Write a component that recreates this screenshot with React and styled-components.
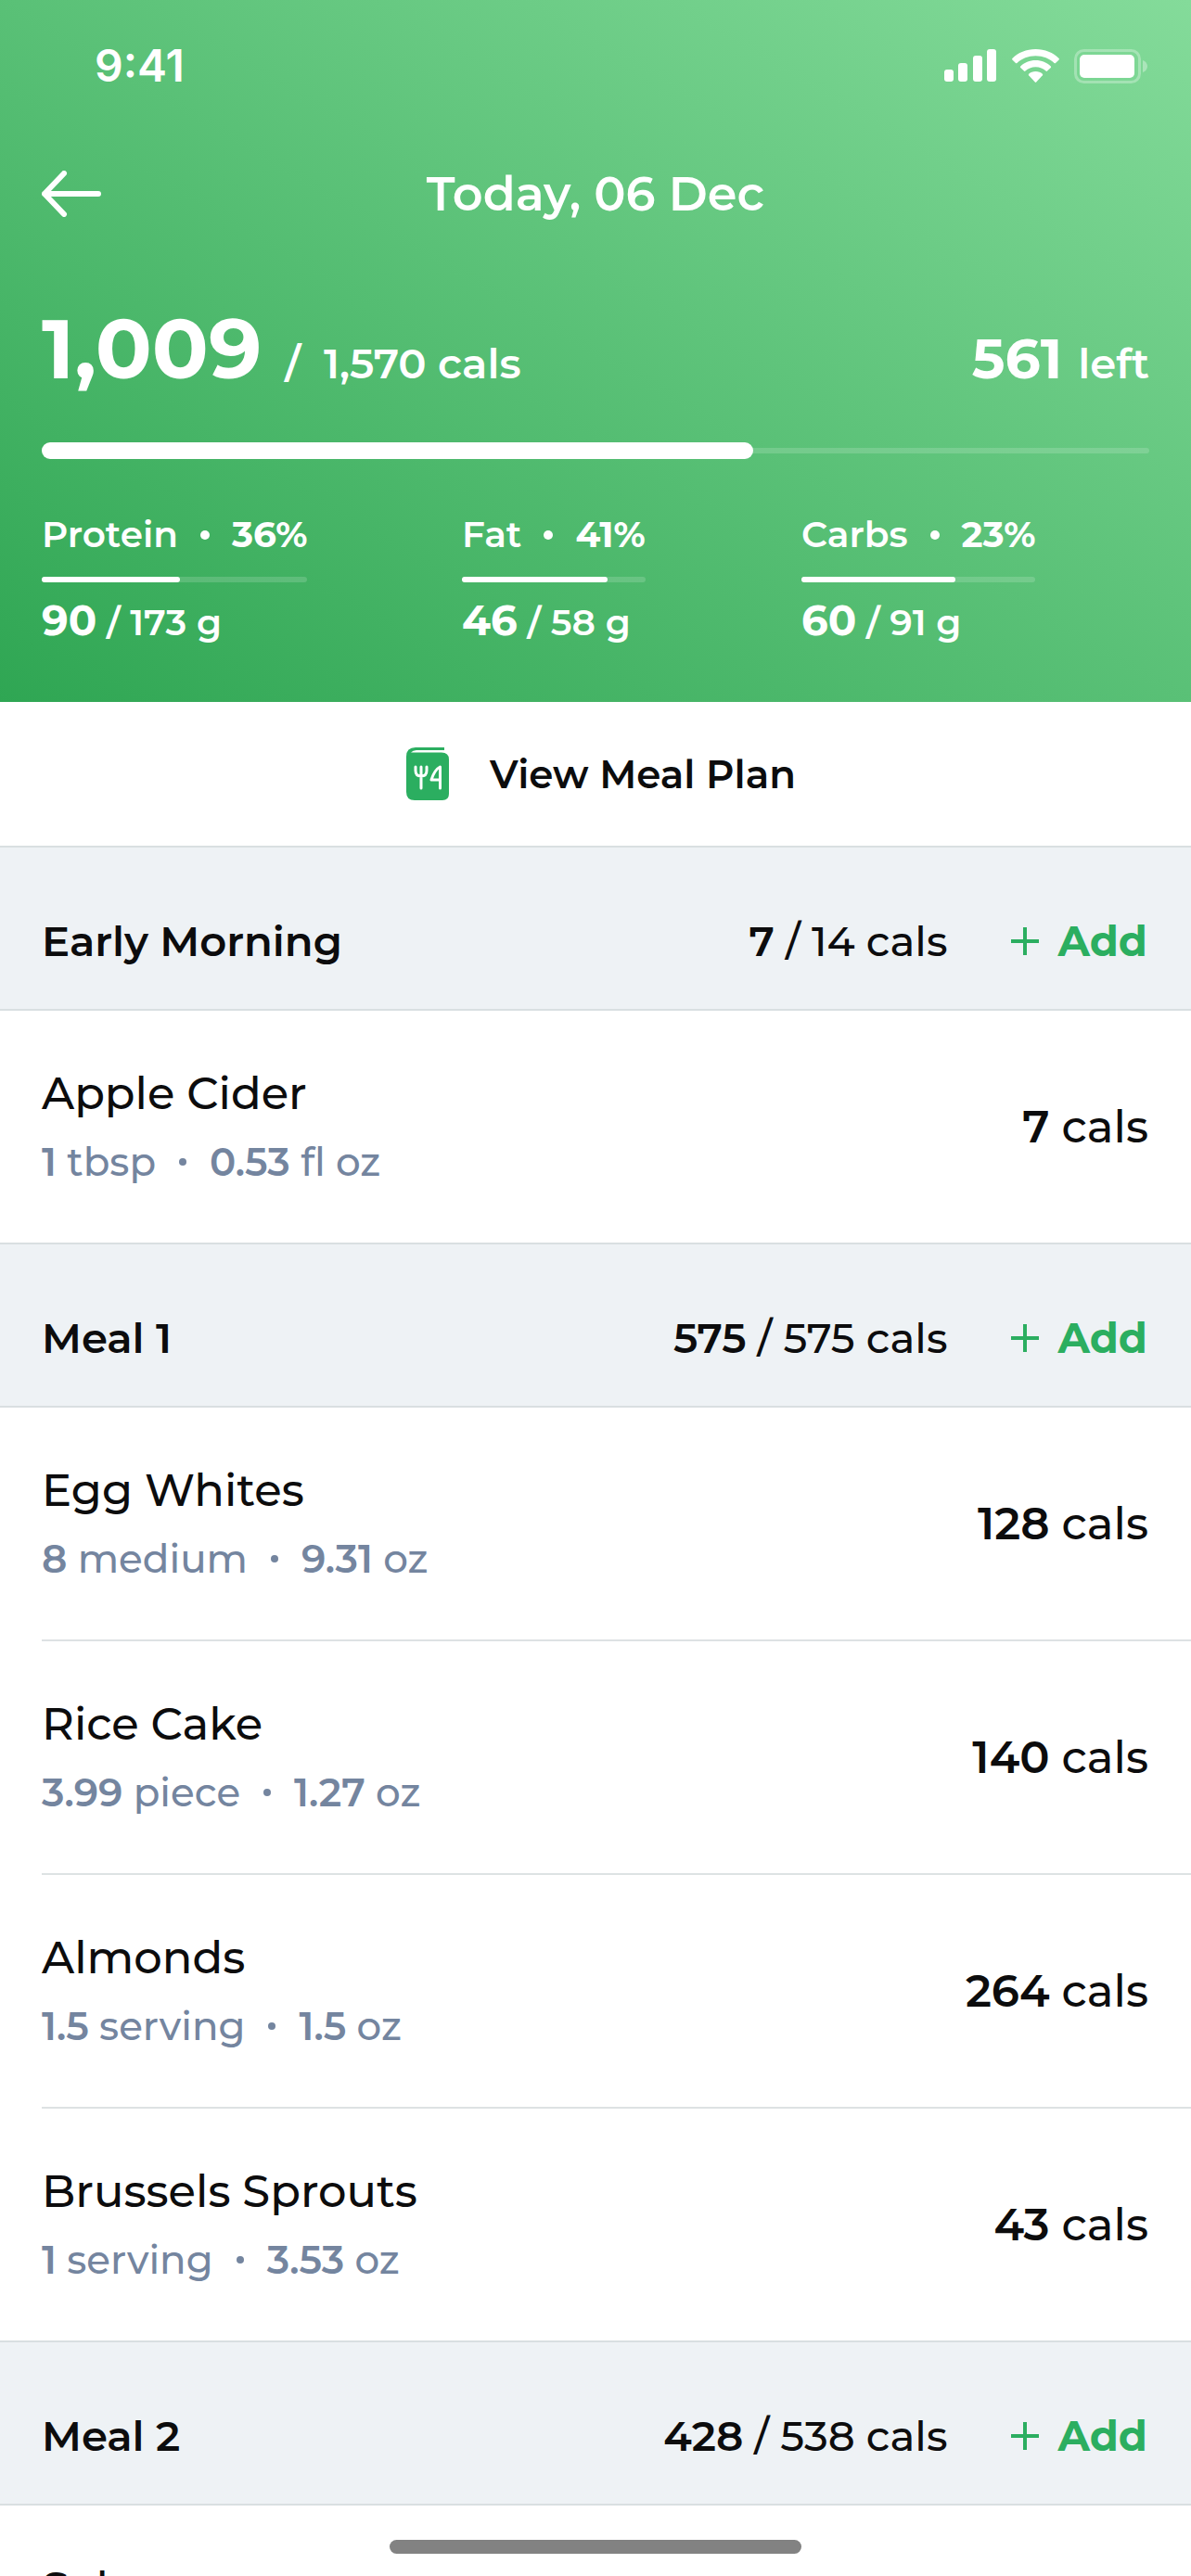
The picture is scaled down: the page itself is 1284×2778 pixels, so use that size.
import React, { useState } from 'react'
import styled, { createGlobalStyle } from 'styled-components'

const GlobalStyle = createGlobalStyle`
  * {
    box-sizing: border-box;
  }
  body {
    margin: 0;
    background: #fff;
    color: #0c0c0d;
    font-family: Montserrat, Inter, sans-serif;
    font-weight: 500;
  }
  h1, h2, h3, p, ul {
    margin: 0;
    padding: 0;
    font-size: inherit;
    font-weight: inherit;
  }
  ul {
    list-style: none;
  }
  button {
    margin: 0;
    padding: 0;
    border: 0;
    background: none;
    color: inherit;
    font: inherit;
    cursor: pointer;
  }
  svg {
    display: block;
  }
`

const Screen = styled.div`
  height: 100vh;
  overflow: hidden;
`

const Summary = styled.header`
  padding: 0 45px 58px;
  color: #fff;
  background: linear-gradient(to top right, #2fa653, #84db9a);
`

const StatusBar = styled.div`
  display: flex;
  justify-content: space-between;
  align-items: center;
  height: 142px;
  padding-left: 57px;
`

const Clock = styled.time`
  font-family: Inter, sans-serif;
  font-size: 48px;
  font-weight: 600;
  line-height: 60px;
`

const StatusIcons = styled.div`
  display: flex;
  align-items: center;
  gap: 16px;
`

const NavBar = styled.nav`
  display: grid;
  grid-template-columns: 1fr auto 1fr;
  align-items: center;
  height: 134px;
`

const Title = styled.h1`
  font-size: 51px;
  font-weight: 600;
  line-height: 64px;
`

const Totals = styled.div`
  display: flex;
  justify-content: space-between;
  align-items: baseline;
  height: 207px;
  padding-top: 46px;
  font-size: 45px;
  font-weight: 600;
  line-height: 108px;
`

const Eaten = styled.p`
  display: flex;
  align-items: baseline;
  gap: 25px;
`

const Left = styled.p`
  display: flex;
  align-items: baseline;
  gap: 17px;
`

const Figure = styled.strong`
  font-size: ${props => props.size || 'inherit'};
  font-weight: 700;
`

const Amount = styled.strong`
  font-weight: 600;
`

const Track = styled.div`
  display: flex;
  align-items: center;
  height: 6px;
  border-radius: 3px;
  background: rgba(255, 255, 255, 0.16);
`

const Fill = styled.div`
  height: ${props => (props.$thick ? '18px' : '6px')};
  border-radius: ${props => (props.$thick ? '9px' : '3px')};
  background: #fff;
`

const Macros = styled.ul`
  display: grid;
  grid-template-columns: 453fr 366fr 375fr;
  justify-items: start;
  margin-top: 62px;
  font-size: 39px;
  font-weight: 600;
`

const MacroLabel = styled.p`
  display: flex;
  align-items: center;
  gap: 24px;
  margin-bottom: 20px;
  line-height: 51px;
`

const MacroAmount = styled.p`
  margin-top: 13px;
  line-height: 56px;
`

const Dot = styled.span`
  width: ${props => props.size};
  height: ${props => props.size};
  border-radius: 50%;
  background: currentColor;
`

const PlanButton = styled.button`
  display: flex;
  justify-content: center;
  align-items: center;
  gap: 37px;
  width: 100%;
  height: 155px;
  font-size: 42px;
  font-weight: 600;
`

const MealHeader = styled.div`
  display: flex;
  align-items: center;
  height: 178px;
  padding: 28px 47px 0 45px;
  border-top: 2px solid #d9dfe1;
  border-bottom: 2px solid #d9dfe1;
  background: #eef2f5;
  font-size: 45px;
  line-height: 60px;
`

const MealName = styled.h2`
  flex: 1;
  font-weight: 600;
`

const AddButton = styled.button`
  display: flex;
  align-items: center;
  gap: 20px;
  margin-left: 69px;
  color: #2bae60;
  font-weight: 700;
`

const FoodRow = styled.li`
  display: flex;
  justify-content: space-between;
  align-items: center;
  height: 250px;
  margin-left: 45px;
  padding-right: 46px;
  font-size: 48px;
  line-height: 64px;

  & + & {
    height: 252px;
    border-top: 2px solid #dde2e3;
  }
`

const Serving = styled.p`
  display: flex;
  align-items: center;
  gap: 25px;
  margin-top: 12px;
  color: #74859f;
  font-size: 42px;
  line-height: 60px;
`

const HomeIndicator = styled.div`
  position: fixed;
  bottom: 24px;
  left: 50%;
  width: 444px;
  height: 15px;
  margin-left: -222px;
  border-radius: 8px;
  background: #828282;
`

const macros = [
  { name: 'Protein', share: 36, eaten: 90, goal: 173 },
  { name: 'Fat', share: 41, eaten: 46, goal: 58 },
  { name: 'Carbs', share: 23, eaten: 60, goal: 91 }
]

const meals = [
  {
    name: 'Early Morning',
    eaten: 7,
    goal: 14,
    foods: [{ name: 'Apple Cider', qty: '1', unit: 'tbsp', weight: '0.53', weightUnit: 'fl oz', cals: 7 }]
  },
  {
    name: 'Meal 1',
    eaten: 575,
    goal: 575,
    foods: [
      { name: 'Egg Whites', qty: '8', unit: 'medium', weight: '9.31', weightUnit: 'oz', cals: 128 },
      { name: 'Rice Cake', qty: '3.99', unit: 'piece', weight: '1.27', weightUnit: 'oz', cals: 140 },
      { name: 'Almonds', qty: '1.5', unit: 'serving', weight: '1.5', weightUnit: 'oz', cals: 264 },
      { name: 'Brussels Sprouts', qty: '1', unit: 'serving', weight: '3.53', weightUnit: 'oz', cals: 43 }
    ]
  },
  {
    name: 'Meal 2',
    eaten: 428,
    goal: 538,
    foods: [{ name: 'Salmon', qty: '1', unit: 'serving', weight: '6', weightUnit: 'oz', cals: 354 }]
  }
]

const SignalIcon = () => (
  <svg width="57" height="36" viewBox="0 0 57 36" fill="currentColor">
    <rect x="0" y="22" width="10" height="13" rx="3" />
    <rect x="15" y="15" width="10" height="20" rx="3" />
    <rect x="31" y="7" width="10" height="28" rx="3" />
    <rect x="46" y="0" width="10" height="35" rx="3" />
  </svg>
)

const WifiIcon = () => (
  <svg width="51" height="37" viewBox="0 0 51 37" fill="currentColor">
    <path d="M25.500 0C35.500 0 44.500 3.800 50.600 10Q51.200 10.700 50.600 11.400L47 15Q46.300 15.600 45.600 15C40.500 10.100 33.400 7.200 25.500 7.200S10.500 10.100 5.400 15Q4.700 15.600 4 15L.4 11.400Q-.2 10.700 .4 10C6.500 3.800 15.500 0 25.500 0Z" />
    <path d="M25.500 12C32 12 37.700 14.400 41.800 18.500Q42.500 19.200 41.800 19.900L38 23.600Q37.300 24.200 36.600 23.600C33.800 20.900 29.900 19.300 25.500 19.300S17.200 20.900 14.400 23.600Q13.700 24.200 13 23.600L9.200 19.900Q8.500 19.200 9.200 18.500C13.300 14.400 19 12 25.500 12Z" />
    <path d="M25.500 24C28.500 24 31 25 32.900 26.800Q33.600 27.500 32.900 28.300L26.200 35.600Q25.500 36.300 24.800 35.600L18.100 28.300Q17.400 27.500 18.100 26.800C20 25 22.500 24 25.500 24Z" />
  </svg>
)

const BatteryIcon = () => (
  <svg width="81" height="37" viewBox="0 0 81 37" fill="currentColor">
    <rect x="1.500" y="1.500" width="69" height="34" rx="9" fill="none" stroke="currentColor" strokeWidth="3" opacity="0.3" />
    <rect x="6" y="6" width="59" height="25" rx="5" />
    <path d="M74 12c3 1.200 5 3.600 5 6.500s-2 5.300-5 6.500z" opacity="0.35" />
  </svg>
)

const BackIcon = () => (
  <svg width="64" height="50" viewBox="0 0 64 50" fill="none" stroke="currentColor" strokeWidth="6" strokeLinecap="round" strokeLinejoin="round">
    <path d="M24 3L3 25l21 22M3 25h58" />
  </svg>
)

const PlanIcon = () => (
  <svg width="65" height="57" viewBox="-12 0 65 57">
    <path d="M10 0H41V3H11Q7 3 5 5.500H38Q46 5.500 46 13V50Q46 57 39 57H9Q0 57 0 48V10Q0 0 10 0Z" fill="#2bae60" />
    <g fill="none" stroke="#fff" strokeWidth="3" strokeLinecap="round" strokeLinejoin="round">
      <path d="M10 21v4q0 6 6 6t6-6v-4M16 21v23" />
      <path d="M36.500 44V21q-6 3-9.500 14h9.500" />
    </g>
  </svg>
)

const PlusIcon = () => (
  <svg width="30" height="30" viewBox="0 0 30 30" stroke="currentColor" strokeWidth="4">
    <path d="M15 0v30M0 15h30" />
  </svg>
)

const percent = (value, total) => `${(value / total) * 100}%`

const Macro = ({ name, share, eaten, goal }) => (
  <li>
    <MacroLabel>
      {name} <Dot size="10px" /> <Figure>{share}%</Figure>
    </MacroLabel>
    <Track>
      <Fill style={{ width: percent(eaten, goal) }} />
    </Track>
    <MacroAmount>
      <Figure size="45px">{eaten}</Figure> / {goal} g
    </MacroAmount>
  </li>
)

const Food = ({ name, qty, unit, weight, weightUnit, cals }) => (
  <FoodRow>
    <div>
      <h3>{name}</h3>
      <Serving>
        <span>
          <Amount>{qty}</Amount> {unit}
        </span>
        <Dot size="8px" />
        <span>
          <Amount>{weight}</Amount> {weightUnit}
        </span>
      </Serving>
    </div>
    <p>
      <Amount>{cals}</Amount> cals
    </p>
  </FoodRow>
)

const Meal = ({ name, eaten, goal, foods }) => (
  <section>
    <MealHeader>
      <MealName>{name}</MealName>
      <p>
        <Amount>{eaten}</Amount> / {goal} cals
      </p>
      <AddButton aria-label={`Add to ${name}`}>
        <PlusIcon />
        Add
      </AddButton>
    </MealHeader>
    <ul>
      {foods.map(food => (
        <Food key={food.name} {...food} />
      ))}
    </ul>
  </section>
)

export default function App() {
  const [goal] = useState(1570)
  const eaten = 1009

  return (
    <Screen>
      <GlobalStyle />
      <Summary>
        <StatusBar>
          <Clock>9:41</Clock>
          <StatusIcons>
            <SignalIcon />
            <WifiIcon />
            <BatteryIcon />
          </StatusIcons>
        </StatusBar>
        <NavBar>
          <button aria-label="Back">
            <BackIcon />
          </button>
          <Title>Today, 06 Dec</Title>
        </NavBar>
        <Totals>
          <Eaten>
            <Figure size="90px">{eaten.toLocaleString('en-US')}</Figure>
            <span>/</span>
            <span>{goal.toLocaleString('en-US')} cals</span>
          </Eaten>
          <Left>
            <Figure size="60px">{goal - eaten}</Figure>
            <span>left</span>
          </Left>
        </Totals>
        <Track>
          <Fill $thick style={{ width: percent(eaten, goal) }} />
        </Track>
        <Macros>
          {macros.map(macro => (
            <Macro key={macro.name} {...macro} />
          ))}
        </Macros>
      </Summary>
      <PlanButton>
        <PlanIcon />
        View Meal Plan
      </PlanButton>
      {meals.map(meal => (
        <Meal key={meal.name} {...meal} />
      ))}
      <HomeIndicator />
    </Screen>
  )
}
